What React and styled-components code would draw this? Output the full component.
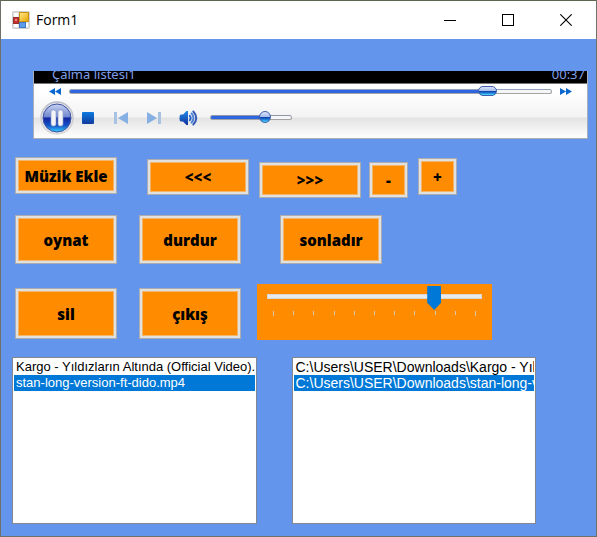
import React, { useState } from "react";
import styled, { createGlobalStyle, css } from "styled-components";

const GlobalStyle = createGlobalStyle`
  * { box-sizing: border-box; }
  body { margin: 0; background: #6495ed; }
  button, input, select { margin: 0; padding: 0; font: inherit; }
`;

const Window = styled.div`
  display: flex;
  flex-direction: column;
  min-height: 100vh;
  border: 1px solid #70706a;
  border-top-color: #5c6650;
  background: #6495ed;
`;

const TitleBar = styled.header`
  display: flex;
  align-items: center;
  height: 38px;
  padding: 0 1px 0 11px;
  background: #fff;
  svg { display: block; }
`;

const Title = styled.h1`
  flex: 1;
  margin: 0 0 0 6px;
  font: 400 14px/20px "Open Sans", "Noto Sans", sans-serif;
  color: #000;
`;

const CaptionButton = styled.button`
  display: grid;
  place-items: center;
  width: 58px;
  height: 38px;
  border: 0;
  background: transparent;
`;

const Form = styled.main`
  display: flex;
  flex-direction: column;
  padding: 32px 8px 12px 11px;
`;

const Player = styled.section`
  margin: 0 0 0 21px;
  border: 1px solid #a9b0ba;
  border-top: 0;
  background: linear-gradient(#fff 0, #fff 20px, #f3f3f3 46px, #e3e3e3 47px, #fff 100%);
`;

const Display = styled.div`
  display: flex;
  justify-content: space-between;
  align-items: flex-end;
  height: 13px;
  padding: 0 2px 0 18px;
  overflow: hidden;
  border-bottom: 1px solid #777;
  background: #000;
  color: #7f9fe8;
  font: 400 13px/18px "Noto Sans", "Open Sans", sans-serif;
`;

const SeekRow = styled.div`
  display: flex;
  align-items: center;
  gap: 8px;
  height: 15px;
  padding: 0 15px 0 15px;
`;

const ControlRow = styled.div`
  display: flex;
  align-items: center;
  height: 39px;
  padding: 0 6px 2px 6px;
`;

const IconButton = styled.button`
  display: grid;
  place-items: center;
  flex: none;
  width: ${(p) => p.$width}px;
  border: 0;
  background: none;
  svg { display: block; }
`;

const bar = css`
  height: 5px;
  border: 1px solid #a4a4a4;
  border-radius: 3px;
  background: linear-gradient(to right, #2f66e0 ${(p) => p.$fill}%, #f6f6f6 ${(p) => p.$fill}%);
`;

const MediaRange = styled.input.attrs({ type: "range" })`
  appearance: none;
  display: block;
  flex: ${(p) => (p.$width ? "none" : 1)};
  width: ${(p) => (p.$width ? `${p.$width}px` : "auto")};
  min-width: 0;
  height: 14px;
  background: transparent;
  &::-webkit-slider-runnable-track {
    ${bar}
    border-top-color: ${(p) => (p.$width ? "#8e98a8" : "#8fa5bd")};
  }
  &::-webkit-slider-thumb {
    appearance: none;
    width: ${(p) => p.$thumb}px;
    height: ${(p) => (p.$width ? 12 : 10)}px;
    margin-top: ${(p) => (p.$width ? -5 : -4)}px;
    border: 1px solid #3f5fae;
    border-radius: 6px;
    background: linear-gradient(#dce6f8 0, #a9bfec 45%, #1238a4 50%, #1873d0 72%, #4fe0ff 100%);
  }
`;

const ButtonRow = styled.div`
  display: flex;
  align-items: flex-start;
  padding-left: 3px;
  margin-top: ${(p) => p.$top}px;
  height: ${(p) => p.$height}px;
`;

const FormButton = styled.button`
  flex: none;
  width: ${(p) => (p.$small ? 39 : 102)}px;
  height: ${(p) => p.$height}px;
  margin: ${(p) => p.$drop || 0}px 0 0 ${(p) => p.$gap || 0}px;
  border: 1px solid #adadad;
  background: #ff8c00;
  box-shadow: inset 0 0 0 2px #e1e1e1, inset 0 0 0 3px #f2b56a;
  color: #000;
  font: 800 15px/20px "Open Sans", "Noto Sans", sans-serif;
`;

const TrackBar = styled.div`
  flex: none;
  width: 235px;
  height: 56px;
  margin-left: 16px;
  padding: 2px 10px;
  background: #ff8c00;
`;

const TrackInput = styled.input.attrs({ type: "range" })`
  appearance: none;
  display: block;
  width: 100%;
  height: 24px;
  background: transparent;
  &::-webkit-slider-runnable-track {
    height: 5px;
    border: 1px solid #d6d6d6;
    background: #e7eaea;
    margin-top: -3px;
  }
  &::-webkit-slider-thumb {
    appearance: none;
    width: 14px;
    height: 24px;
    margin-top: -9px;
    border: 0;
    background: #0078d7;
    clip-path: polygon(0 0, 100% 0, 100% 70%, 50% 100%, 0 70%);
  }
`;

const Ticks = styled.div`
  display: flex;
  justify-content: space-between;
  padding: 1px 6px 0;
`;

const Tick = styled.span`
  width: 1px;
  height: ${(p) => (p.$end ? 5 : 4)}px;
  background: #d8c8b0;
`;

const Lists = styled.div`
  display: grid;
  grid-template-columns: 1fr 1fr;
  gap: 35px;
  margin-top: 17px;
  padding: 0 52px 0 0;
`;

const ListBox = styled.select`
  appearance: none;
  display: block;
  width: 100%;
  min-width: 0;
  height: 167px;
  padding: 1px;
  border: 1px solid #828790;
  border-radius: 0;
  outline: 0;
  overflow: hidden;
  background: #fff;
  color: #000;
  font: 400 ${(p) => p.$text}px/16px "Liberation Sans", Arial, sans-serif;
  option {
    height: 16px;
    min-height: 16px;
    padding: 0 2px;
    line-height: 16px;
    overflow: hidden;
    white-space: nowrap;
    color: #000;
  }
  option:checked {
    background: #0078d7 linear-gradient(#0078d7, #0078d7);
    color: #fff !important;
  }
`;

function AppIcon() {
  return (
    <svg width="18" height="18" viewBox="0 0 18 18" aria-hidden="true">
      <defs>
        <linearGradient id="gold" x2="1" y2="1">
          <stop stopColor="#ffe98a" />
          <stop offset="1" stopColor="#e9a400" />
        </linearGradient>
      </defs>
      <rect x=".5" y=".5" width="17" height="17" rx="1" fill="#dcdcdc" stroke="#cfcfcf" />
      <path d="M2 2h4v4H2zM2 13h4v3H2zM14 12h2v4h-2z" fill="#fff" />
      <rect x="7.5" y="1.5" width="9" height="9" fill="url(#gold)" stroke="#c99414" />
      <rect x="1.5" y="6.5" width="5" height="6" fill="#c4302b" stroke="#97302c" />
      <rect x="3" y="8" width="2" height="2" fill="#e88" />
      <rect x="7.5" y="11.5" width="6" height="5" fill="#5b9bea" stroke="#3f76c8" />
    </svg>
  );
}

function PauseIcon() {
  return (
    <svg width="34" height="34" viewBox="0 0 34 34" aria-hidden="true">
      <defs>
        <linearGradient id="ball" x2="0" y2="1">
          <stop stopColor="#c9d3f0" />
          <stop offset=".46" stopColor="#6f86cf" />
          <stop offset=".5" stopColor="#1226a0" />
          <stop offset=".76" stopColor="#1450c8" />
          <stop offset="1" stopColor="#35d5ff" />
        </linearGradient>
        <linearGradient id="rim" x2="0" y2="1">
          <stop stopColor="#b9bdc6" />
          <stop offset="1" stopColor="#d8d8d8" />
        </linearGradient>
      </defs>
      <circle cx="17" cy="17" r="16" fill="#e4e4e8" stroke="url(#rim)" strokeWidth="1.5" />
      <circle cx="17" cy="17" r="14" fill="url(#ball)" stroke="#3c50a4" />
      <rect x="11" y="9" width="5" height="16" rx="2" fill="#f3f4f8" stroke="#8f9cc8" strokeWidth=".7" />
      <rect x="18" y="9" width="5" height="16" rx="2" fill="#f3f4f8" stroke="#8f9cc8" strokeWidth=".7" />
    </svg>
  );
}

function SpeakerIcon() {
  return (
    <svg width="20" height="16" viewBox="0 0 20 16" aria-hidden="true">
      <defs>
        <linearGradient id="spk" x2="0" y2="1">
          <stop stopColor="#1d8be8" />
          <stop offset="1" stopColor="#12309c" />
        </linearGradient>
      </defs>
      <path d="M2 4.5h2L7.500 1H9v14H7.500L4 11.500H2Q.5 11.500 .5 8T2 4.500z" fill="url(#spk)" />
      <g fill="none" strokeLinecap="round" strokeWidth="1.9">
        <path d="M10.800 5.800q1.800 2.200 0 4.400" stroke="#2a62c8" />
        <path d="M12.500 3.400q4 4.600 0 9.200" stroke="#4a80d0" />
        <path d="M14.300 1.500q6 6.500 0 13" stroke="#3458b8" />
      </g>
    </svg>
  );
}

const files = [
  "Kargo - Yıldızların Altında (Official Video).mp4",
  "stan-long-version-ft-dido.mp4",
];
const folder = "C:\\Users\\USER\\Downloads\\";

function FileList({ label, items, selected, onSelect, text }) {
  return (
    <ListBox
      size={10}
      aria-label={label}
      $text={text}
      value={selected}
      onChange={(e) => onSelect(Number(e.target.value))}
    >
      {items.map((item, i) => (
        <option key={item} value={i}>{item}</option>
      ))}
    </ListBox>
  );
}

export default function App() {
  const [seek, setSeek] = useState(884);
  const [volume, setVolume] = useState(70);
  const [level, setLevel] = useState(8);
  const [selected, setSelected] = useState(1);

  return (
    <>
      <GlobalStyle />
      <Window>
        <TitleBar>
          <AppIcon />
          <Title>Form1</Title>
          <CaptionButton aria-label="Minimize">
            <svg width="12" height="12"><path d="M0 6.5h12" stroke="#000" /></svg>
          </CaptionButton>
          <CaptionButton aria-label="Maximize">
            <svg width="12" height="12"><rect x=".5" y=".5" width="11" height="11" fill="none" stroke="#000" /></svg>
          </CaptionButton>
          <CaptionButton aria-label="Close">
            <svg width="12" height="12"><path d="M.3.3l11.4 11.4M11.7.3L.3 11.7" stroke="#000" strokeWidth="1.1" /></svg>
          </CaptionButton>
        </TitleBar>

        <Form>
          <Player aria-label="Media player">
            <Display>
              <span>Çalma listesi1</span>
              <span>00:37</span>
            </Display>
            <SeekRow>
              <IconButton $width={12} aria-label="Rewind">
                <svg width="12" height="7"><path d="M6 0v7L0 3.5zM12 0v7L6 3.5z" fill="#0a67d0" /></svg>
              </IconButton>
              <MediaRange
                aria-label="Seek" min={0} max={1000} value={seek} $thumb={19} $fill={seek / 10}
                onChange={(e) => setSeek(Number(e.target.value))}
              />
              <IconButton $width={12} aria-label="Fast forward">
                <svg width="12" height="7"><path d="M0 0v7l6-3.500zM6 0v7l6-3.500z" fill="#0a67d0" /></svg>
              </IconButton>
            </SeekRow>
            <ControlRow>
              <IconButton $width={34} aria-label="Pause"><PauseIcon /></IconButton>
              <IconButton $width={28} aria-label="Stop">
                <svg width="12" height="12">
                  <defs>
                    <linearGradient id="stop" x2="0" y2="1">
                      <stop stopColor="#0a7be0" />
                      <stop offset="1" stopColor="#123a9e" />
                    </linearGradient>
                  </defs>
                  <rect width="12" height="12" rx="1" fill="url(#stop)" />
                </svg>
              </IconButton>
              <IconButton $width={38} aria-label="Previous">
                <svg width="14" height="12"><path d="M0 0h3v12H0z" fill="#a8c2e2" /><path d="M14 0v12L4 6z" fill="#86b0e4" /></svg>
              </IconButton>
              <IconButton $width={28} aria-label="Next">
                <svg width="14" height="12"><path d="M11 0h3v12h-3z" fill="#a8c2e2" /><path d="M0 0v12l10-6z" fill="#86b0e4" /></svg>
              </IconButton>
              <IconButton $width={42} aria-label="Mute"><SpeakerIcon /></IconButton>
              <MediaRange
                aria-label="Volume" min={0} max={100} value={volume} $width={82} $thumb={12} $fill={volume}
                onChange={(e) => setVolume(Number(e.target.value))}
              />
            </ControlRow>
          </Player>

          <ButtonRow $top={18} $height={41}>
            <FormButton $height={37}>Müzik Ekle</FormButton>
            <FormButton $height={36} $gap={30} $drop={2}>&lt;&lt;&lt;</FormButton>
            <FormButton $height={36} $gap={10} $drop={5}>&gt;&gt;&gt;</FormButton>
            <FormButton $height={36} $gap={8} $drop={5} $small>-</FormButton>
            <FormButton $height={37} $gap={10} $drop={1} $small>+</FormButton>
          </ButtonRow>

          <ButtonRow $top={17} $height={49}>
            <FormButton $height={49}>oynat</FormButton>
            <FormButton $height={49} $gap={22}>durdur</FormButton>
            <FormButton $height={49} $gap={39}>sonladır</FormButton>
          </ButtonRow>

          <ButtonRow $top={20} $height={56}>
            <FormButton $height={51} $drop={4}>sil</FormButton>
            <FormButton $height={51} $gap={22} $drop={4}>çıkış</FormButton>
            <TrackBar>
              <TrackInput
                aria-label="Level" min={0} max={10} value={level}
                onChange={(e) => setLevel(Number(e.target.value))}
              />
              <Ticks>
                {Array.from({ length: 11 }, (_, i) => (
                  <Tick key={i} $end={i === 0 || i === 10} />
                ))}
              </Ticks>
            </TrackBar>
          </ButtonRow>

          <Lists>
            <FileList label="Songs" items={files} selected={selected} onSelect={setSelected} text={13} />
            <FileList label="Paths" items={files.map((f) => folder + f)} selected={selected} onSelect={setSelected} text={14} />
          </Lists>
        </Form>
      </Window>
    </>
  );
}
